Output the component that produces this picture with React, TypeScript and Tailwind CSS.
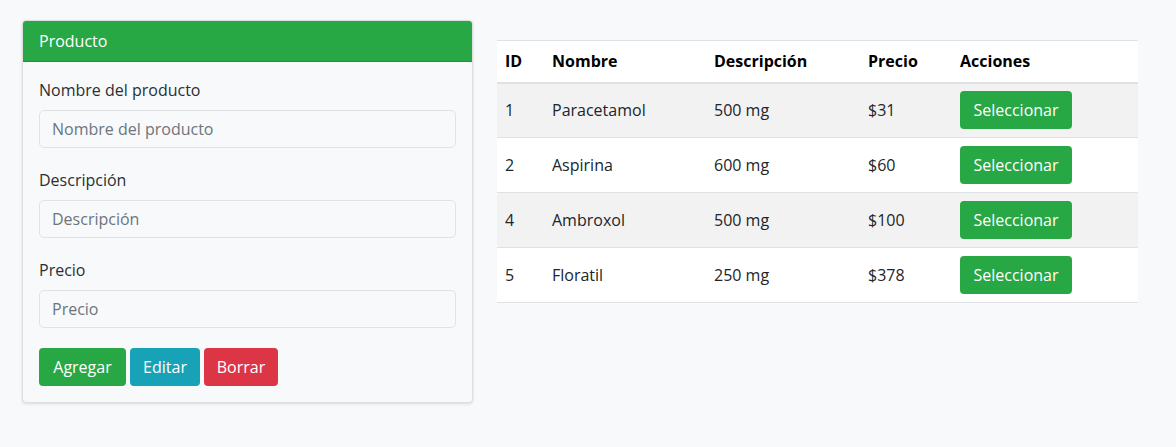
import React from "react";

const productos = [
  { id: 1, nombre: "Paracetamol", descripcion: "500 mg", precio: 31 },
  { id: 2, nombre: "Aspirina", descripcion: "600 mg", precio: 60 },
  { id: 4, nombre: "Ambroxol", descripcion: "500 mg", precio: 100 },
  { id: 5, nombre: "Floratil", descripcion: "250 mg", precio: 378 },
];

const campos = ["Nombre del producto", "Descripción", "Precio"];

export default function App() {
  return (
    <div
      className="min-h-[447px] bg-[#f8f9fa] text-[#212529] text-base"
      style={{ fontFamily: '"Open Sans", "Noto Sans", sans-serif' }}
    >
      <div className="flex items-start gap-[24px] pl-[22px] pt-[20px]">
        {/* formulario */}
        <div className="w-[451px] rounded border border-[#dcdfe2] bg-[#f8f9fa] shadow-[0_1px_3px_rgba(0,0,0,0.12)] overflow-hidden">
          <div className="h-[41px] bg-[#28a745] border-b border-[#23923d] px-4 flex items-center text-white">
            Producto
          </div>
          <div className="px-4 pt-4 pb-4">
            {campos.map((c) => (
              <div key={c} className="mb-5">
                <label className="block leading-6 mb-2 text-[#2b2f33]">{c}</label>
                <input
                  placeholder={c}
                  className="w-full h-[38px] rounded-[5px] border border-[#dfe2e6] bg-[#f8f9fa] px-3 text-base placeholder:text-[#6c757d] outline-none"
                />
              </div>
            ))}
            <div className="flex gap-1">
              <button className="h-[38px] w-[87px] rounded bg-[#28a745] text-white">Agregar</button>
              <button className="h-[38px] w-[70px] rounded bg-[#17a2b8] text-white">Editar</button>
              <button className="h-[38px] w-[74px] rounded bg-[#dc3545] text-white">Borrar</button>
            </div>
          </div>
        </div>

        {/* tabla */}
        <table className="mt-[20px] w-[641px] bg-white border-collapse text-left">
          <thead>
            <tr className="border-t border-[#dee2e6] border-b-2 border-b-[#dee2e6]">
              <th className="w-[47px] h-[42px] px-2 font-bold text-black">ID</th>
              <th className="w-[162px] px-2 font-bold text-black">Nombre</th>
              <th className="w-[154px] px-2 font-bold text-black">Descripción</th>
              <th className="w-[92px] px-2 font-bold text-black">Precio</th>
              <th className="px-2 font-bold text-black">Acciones</th>
            </tr>
          </thead>
          <tbody>
            {productos.map((p, i) => (
              <tr
                key={p.id}
                className={`border-b border-[#dee2e6] ${i % 2 === 0 ? "bg-[#f2f2f2]" : "bg-white"}`}
              >
                <td className="px-2 h-[55px]">{p.id}</td>
                <td className="px-2">{p.nombre}</td>
                <td className="px-2">{p.descripcion}</td>
                <td className="px-2">${p.precio}</td>
                <td className="px-2">
                  <button className="h-[38px] w-[112px] rounded bg-[#28a745] text-white">
                    Seleccionar
                  </button>
                </td>
              </tr>
            ))}
          </tbody>
        </table>
      </div>
    </div>
  );
}
